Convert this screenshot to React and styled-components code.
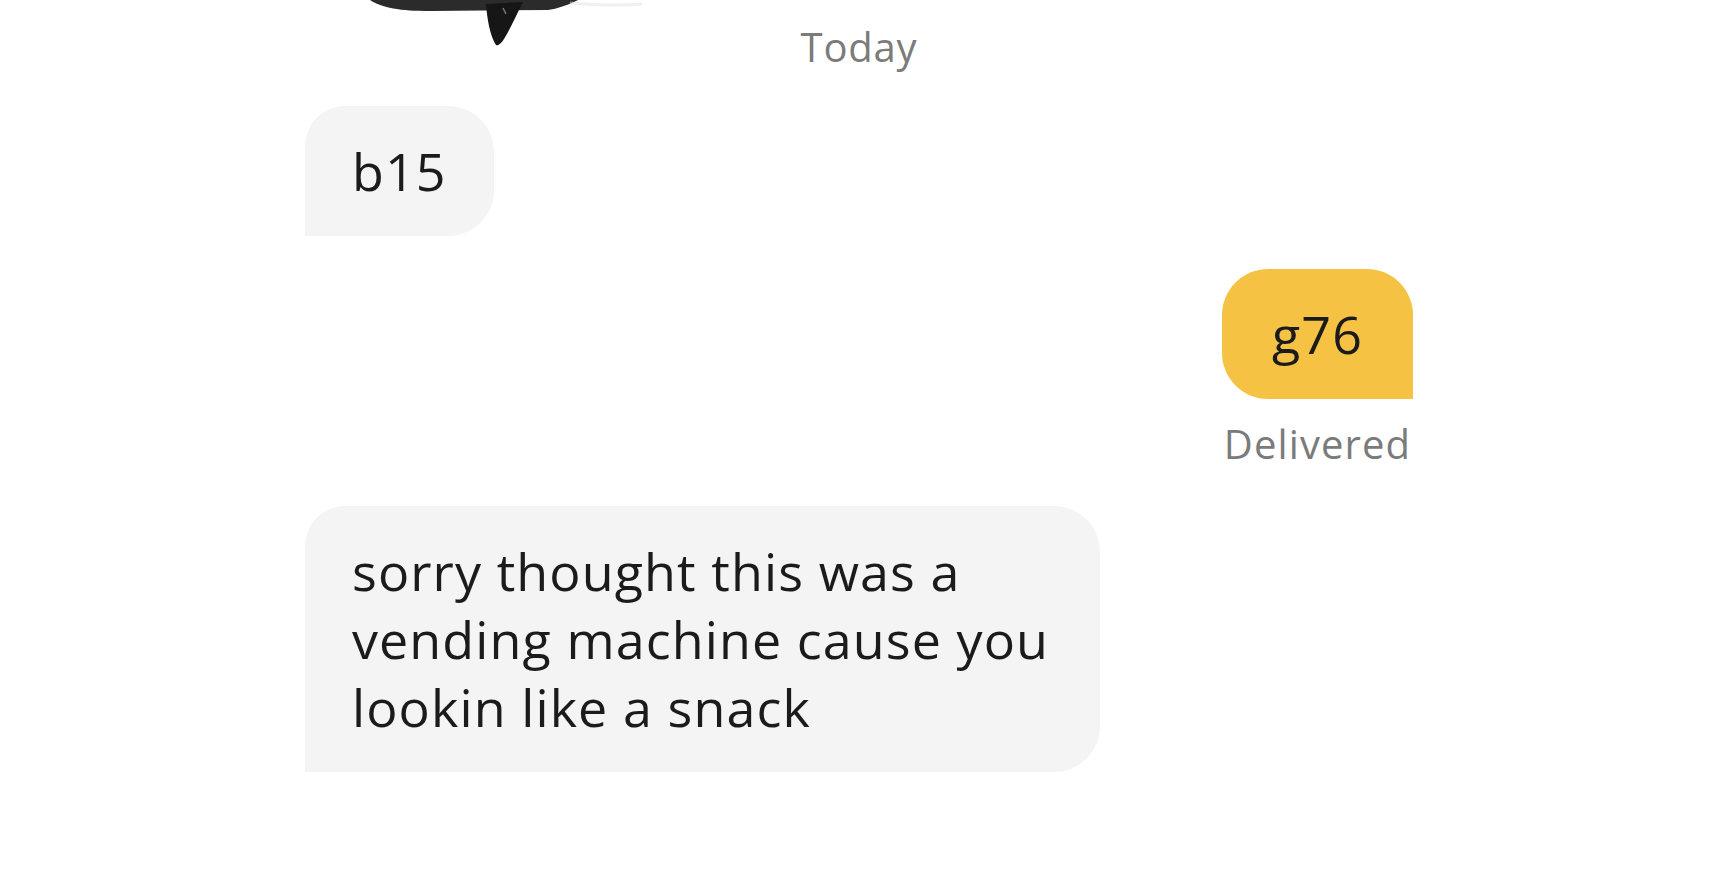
import styled, { createGlobalStyle } from "styled-components";

const GlobalStyle = createGlobalStyle`
  html, body {
    margin: 0;
    padding: 0;
    background: #ffffff;
  }
  body {
    font-family: "Open Sans", Lato, "Liberation Sans", sans-serif;
    -webkit-font-smoothing: antialiased;
  }
`;

const messages = [
  { id: 1, from: "them", text: "b15" },
  { id: 2, from: "me", text: "g76", status: "Delivered" },
  {
    id: 3,
    from: "them",
    text: "sorry thought this was a vending machine cause you lookin like a snack",
  },
];

const Scribble = () => (
  <ScribbleMark width="320" height="60" viewBox="0 0 320 60">
    <path
      d="M40 0 C52 8 70 11 100 11 L218 10 C230 8 240 4 248 0 Z"
      fill="#2b2b2b"
    />
    <path
      d="M156 4 C157 18 160 36 166 45 C172 47 178 32 193 2 Z"
      fill="#161616"
    />
    <path d="M173 8 L176 14" stroke="#777" strokeWidth="1.5" />
    <path
      d="M240 3 C265 5 290 6 312 4"
      stroke="#e2e2e2"
      strokeWidth="3"
      fill="none"
      opacity="0.5"
    />
  </ScribbleMark>
);

const App = () => {
  return (
    <>
      <GlobalStyle />
      <Screen>
        <Scribble />
        <Thread>
          <DateLabel>Today</DateLabel>
          {messages.map((m) =>
            m.from === "me" ? (
              <OutgoingGroup key={m.id}>
                <Bubble $mine>{m.text}</Bubble>
                <Status>{m.status}</Status>
              </OutgoingGroup>
            ) : (
              <Bubble key={m.id}>{m.text}</Bubble>
            )
          )}
        </Thread>
      </Screen>
    </>
  );
};

const Screen = styled.div`
  position: relative;
  width: 100%;
  height: 886px;
  overflow: hidden;
  background: #ffffff;
`;

const ScribbleMark = styled.svg`
  position: absolute;
  left: 330px;
  top: 0;
`;

const Thread = styled.div`
  width: 1108px;
  margin: 0 auto;
  padding: 22px 0 0 4px;
  display: flex;
  flex-direction: column;
  align-items: flex-start;
`;

const DateLabel = styled.div`
  align-self: center;
  font-size: 40px;
  letter-spacing: 0.8px;
  line-height: 50px;
  color: #7b7b7b;
  margin-bottom: 34px;
`;

const Bubble = styled.div`
  box-sizing: border-box;
  max-width: 795px;
  padding: 31px ${(p) => (p.$mine ? "50px" : "47px")};
  font-size: 52px;
  font-weight: 500;
  letter-spacing: 1.1px;
  line-height: 68px;
  color: #1b1b1b;
  background: ${(p) => (p.$mine ? "#f5c244" : "#f4f4f4")};
  border-radius: ${(p) => (p.$mine ? "46px 46px 0 46px" : "40px 46px 46px 0")};
  margin-bottom: 33px;
`;

const OutgoingGroup = styled.div`
  align-self: flex-end;
  display: flex;
  flex-direction: column;
  align-items: center;
  margin-bottom: 37px;

  & > ${Bubble} {
    margin-bottom: 20px;
  }
`;

const Status = styled.div`
  font-size: 40px;
  letter-spacing: 1.1px;
  line-height: 50px;
  color: #7b7b7b;
`;

export default App;
